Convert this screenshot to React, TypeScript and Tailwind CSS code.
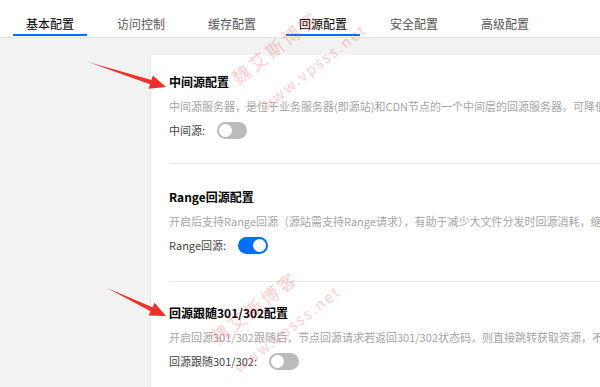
import { useState } from "react";

const tabs = ["基本配置", "访问控制", "缓存配置", "回源配置", "安全配置", "高级配置"];

const sections = [
  {
    title: "中间源配置",
    desc: "中间源服务器，是位于业务服务器(即源站)和CDN节点的一个中间层的回源服务器。可降低回源压力，提升回源效率。",
    label: "中间源:",
    on: false,
    pad: "pt-[19px] pb-[24px] border-b",
  },
  {
    title: "Range回源配置",
    desc: "开启后支持Range回源（源站需支持Range请求），有助于减少大文件分发时回源消耗，缩短响应时间。",
    label: "Range回源:",
    on: true,
    pad: "pt-[25px] pb-[27px] border-b",
  },
  {
    title: "回源跟随301/302配置",
    desc: "开启回源301/302跟随后，节点回源请求若返回301/302状态码，则直接跳转获取资源，不会返回给客户端。",
    label: "回源跟随301/302:",
    on: false,
    pad: "pt-[23px]",
  },
];

function Toggle({ on }: { on: boolean }) {
  return (
    <div
      className={`relative w-[30px] h-[17px] rounded-full ${on ? "bg-[#006eff]" : "bg-[#bbbbbb]"}`}
    >
      <div
        className={`absolute top-[2px] w-[13px] h-[13px] rounded-full bg-white ${on ? "left-[15px]" : "left-[2px]"}`}
      />
    </div>
  );
}

function Arrow({ x1, y1, x2, y2 }: { x1: number; y1: number; x2: number; y2: number }) {
  const dx = x2 - x1;
  const dy = y2 - y1;
  const len = Math.hypot(dx, dy);
  const ux = dx / len;
  const uy = dy / len;
  const px = -uy;
  const py = ux;
  const hb = 16; // head length
  const bx = x2 - ux * hb;
  const by = y2 - uy * hb;
  const pts = [
    [x1, y1],
    [bx + px * 2.2, by + py * 2.2],
    [bx + px * 7, by + py * 7],
    [x2, y2],
    [bx - px * 7, by - py * 7],
    [bx - px * 2.2, by - py * 2.2],
  ]
    .map((p) => p.join(","))
    .join(" ");
  return <polygon points={pts} fill="#f0302a" />;
}

export default function App() {
  const [active, setActive] = useState(3);

  return (
    <div
      className="relative w-[600px] h-[387px] overflow-hidden bg-[#f2f2f2]"
      style={{ fontFamily: '"Noto Sans CJK SC", "Liberation Sans", sans-serif' }}
    >
      <div className="h-[38px] bg-white border-b border-[#e2e2e2] flex pl-[13px] gap-[17px]">
        {tabs.map((t, i) => (
          <button
            key={t}
            onClick={() => setActive(i)}
            className={`relative w-[74px] h-full flex items-center justify-center pt-[10px] text-[12px] ${
              i === active || i === 0 ? "text-[#000000]" : "text-[#555555]"
            }`}
          >
            {t}
            {(i === active || i === 0) && (
              <span className="absolute left-0 right-0 bottom-[1px] h-[2px] bg-[#006eff]" />
            )}
          </button>
        ))}
      </div>

      <div className="ml-[150px] mt-[17px] bg-white border-l border-[#e8e8ee] h-[340px] pl-[18px] overflow-hidden">
        {sections.map((s) => (
          <div key={s.title} className={`${s.pad} border-[#e8e8e8]`}>
            <div className="text-[12px] leading-[16px] font-bold text-black whitespace-nowrap">{s.title}</div>
            <div className="mt-[8px] text-[11px] leading-[16px] text-[#a5a5a5] whitespace-nowrap">{s.desc}</div>
            <div className="mt-[8px] flex items-center gap-[12px] h-[17px]">
              <span className="text-[11px] text-[#444444] whitespace-nowrap">{s.label}</span>
              <Toggle on={s.on} />
            </div>
          </div>
        ))}
      </div>

      <svg className="absolute inset-0 pointer-events-none" width="600" height="387">
        <Arrow x1={88} y1={62} x2={166} y2={87} />
        <Arrow x1={107} y1={288} x2={166} y2={316} />
      </svg>

      <div className="absolute left-[234px] top-[66px] -rotate-[38deg] origin-left text-[18px] tracking-[3px] text-[#f04040] opacity-25 pointer-events-none whitespace-nowrap">
        魏艾斯博客
      </div>
      <div className="absolute left-[262px] top-[96px] -rotate-[38deg] origin-left text-[15px] tracking-[2px] text-[#f04040] opacity-25 pointer-events-none whitespace-nowrap">
        www.vpsss.net
      </div>
      <div className="absolute left-[213px] top-[326px] -rotate-[38deg] origin-left text-[18px] tracking-[3px] text-[#f04040] opacity-25 pointer-events-none whitespace-nowrap">
        魏艾斯博客
      </div>
      <div className="absolute left-[236px] top-[358px] -rotate-[38deg] origin-left text-[15px] tracking-[2px] text-[#f04040] opacity-25 pointer-events-none whitespace-nowrap">
        www.vpsss.net
      </div>
    </div>
  );
}
